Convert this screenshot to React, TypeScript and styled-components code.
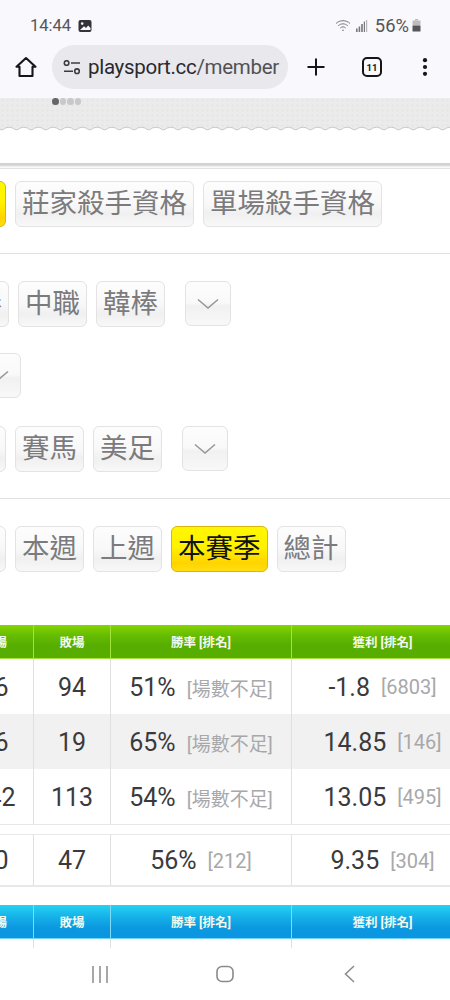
import React from 'react';
import styled, { createGlobalStyle } from 'styled-components';

const GlobalStyle = createGlobalStyle`
  html, body {
    margin: 0;
    padding: 0;
    background: #fff;
  }
  * {
    box-sizing: border-box;
  }
`;

const CJK = `Roboto, "Noto Sans CJK TC", sans-serif`;

const Screen = styled.div`
  width: 450px;
  height: 1000px;
  display: flex;
  flex-direction: column;
  overflow: hidden;
  font-family: ${CJK};
  background: #fff;
`;

const BrowserChrome = styled.header`
  flex: none;
  height: 98px;
  background: #f8f8fd;
  display: flex;
  flex-direction: column;
`;

const StatusBar = styled.div`
  height: 45px;
  padding: 6px 29px 0 30px;
  display: flex;
  align-items: center;
  color: #55555a;
`;

const Clock = styled.span`
  font-size: 16.5px;
  margin-right: 7px;
`;

const Spacer = styled.div`
  flex: 1;
`;

const SignalGroup = styled.div`
  display: flex;
  align-items: center;
  gap: 5px;
`;

const Battery = styled.span`
  font-size: 18.4px;
  margin: 0 3px 0 7px;
`;

const Toolbar = styled.div`
  height: 53px;
  padding: 0 0 9px 15px;
  display: flex;
  align-items: center;
  color: #1d1d20;
`;

const UrlPill = styled.div`
  width: 236px;
  height: 44px;
  margin-left: 15px;
  padding: 0 9px 0 11px;
  border-radius: 22px;
  background: #e8e8ed;
  display: flex;
  align-items: center;
  overflow: hidden;
`;

const UrlText = styled.span`
  margin-left: 7px;
  font-size: 20.5px;
  letter-spacing: -0.3px;
  color: #2a2a2e;
  white-space: nowrap;
`;

const UrlPath = styled.span`
  color: #515155;
`;

const ToolIcon = styled.div<{ $width: number }>`
  width: ${({ $width }) => $width}px;
  display: flex;
  justify-content: center;
`;

const Main = styled.main`
  flex: 1;
  min-height: 0;
  overflow: hidden;
`;

const Banner = styled.div`
  position: relative;
  height: 33px;
  background-color: #ebebeb;
  background-image: radial-gradient(#e6e6e6 1px, transparent 1.2px);
  background-size: 5px 5px;
`;

const BannerDots = styled.div`
  position: absolute;
  left: 52px;
  top: 0;
  display: flex;
  gap: 1px;
`;

const BannerDot = styled.span<{ $active?: boolean }>`
  width: 6.5px;
  height: 7px;
  border-radius: 50%;
  background: ${({ $active }) => ($active ? '#66666a' : '#c8c8ca')};
`;

const WaveEdge = styled.svg`
  position: absolute;
  left: 0;
  bottom: -2px;
  display: block;
`;

const BannerGap = styled.div`
  height: 32px;
`;

const HeavyRule = styled.div`
  height: 5px;
  background: linear-gradient(#d2d2d2 0, #d2d2d2 40%, #ededed 70%, #fff 100%);
`;

const Section = styled.section<{ $top: number; $bottom: number }>`
  padding: ${({ $top, $bottom }) => `${$top}px 0 ${$bottom}px`};
  border-top: 1px solid #e2e2e2;
`;

const ButtonRow = styled.div<{ $offset: number; $after?: number }>`
  display: flex;
  align-items: flex-start;
  gap: 9px;
  height: 46px;
  margin-left: ${({ $offset }) => -$offset}px;
  margin-bottom: ${({ $after = 0 }) => $after}px;
`;

const FilterButton = styled.div<{ $active?: boolean }>`
  flex: none;
  height: 46px;
  padding: 0 6px;
  border-radius: 6px;
  border: 1px solid ${({ $active }) => ($active ? '#d8b60a' : '#e3e3e3')};
  background: ${({ $active }) =>
    $active
      ? 'linear-gradient(#fff700 0, #fff200 45%, #ffd400 82%, #ffdf10 100%)'
      : 'linear-gradient(#fdfdfd 0, #f8f8f8 50%, #f0f0f0 72%, #f8f8f8 100%)'};
  color: ${({ $active }) => ($active ? '#111' : '#7b7b7e')};
  font-size: 27.5px;
  line-height: 44px;
  white-space: nowrap;
`;

const ChevronButton = styled.div<{ $lead: number }>`
  flex: none;
  width: 46px;
  height: 45px;
  margin-left: ${({ $lead }) => $lead}px;
  border-radius: 6px;
  border: 1px solid #e3e3e3;
  background: linear-gradient(#fdfdfd 0, #f9f9f9 48%, #f1f1f1 56%, #f8f8f8 100%);
  display: flex;
  align-items: center;
  justify-content: center;
`;

const Table = styled.div`
  width: 517px;
  margin-left: -44px;
`;

const TableRow = styled.div<{ $shade?: boolean; $height: number; $underline?: number; $overline?: boolean }>`
  display: grid;
  grid-template-columns: 77px 77px 181px 182px;
  height: ${({ $height }) => $height}px;
  background: ${({ $shade }) => ($shade ? '#f1f1f1' : '#fff')};
  border-bottom: ${({ $underline = 0 }) => $underline}px solid #e8e8e8;
  border-top: ${({ $overline }) => ($overline ? '1px solid #e8e8e8' : 'none')};
`;

const Cell = styled.div<{ $first?: boolean }>`
  display: flex;
  align-items: center;
  justify-content: center;
  padding-top: 1px;
  border-left: ${({ $first }) => ($first ? 'none' : '1px solid #e0e0e0')};
  font-size: 25px;
  color: #3a3a3c;
  white-space: nowrap;
`;

const Rank = styled.span<{ $note?: boolean }>`
  margin-left: 11px;
  font-size: ${({ $note }) => ($note ? 19 : 20)}px;
  color: #a8a8aa;
`;

const TableHead = styled.div<{ $tone: 'green' | 'blue' }>`
  display: grid;
  grid-template-columns: 77px 77px 181px 182px;
  height: 34px;
  background: ${({ $tone }) =>
    $tone === 'green'
      ? 'linear-gradient(#86d500 0, #67bd00 30%, #58ae00 60%, #58ae00 100%)'
      : 'linear-gradient(#25d2f3 0, #14aee8 40%, #0b98e0 70%, #0a96e0 100%)'};
  border-bottom: 1px solid ${({ $tone }) => ($tone === 'green' ? '#a4e23c' : '#6fd4f6')};
`;

const HeadCell = styled.div<{ $first?: boolean; $tone: 'green' | 'blue' }>`
  display: flex;
  align-items: center;
  justify-content: center;
  border-left: ${({ $first, $tone }) =>
    $first ? 'none' : `1px solid ${$tone === 'green' ? '#a4e23c' : '#7fdcf8'}`};
  font-size: 12.5px;
  font-weight: 700;
  color: #f4f9ee;
  white-space: nowrap;
`;

const Gap = styled.div<{ $height: number }>`
  height: ${({ $height }) => $height}px;
`;

const NavBar = styled.nav`
  flex: none;
  height: 52px;
  padding: 0 38px;
  background: #fff;
  display: grid;
  grid-template-columns: 1fr 1fr 1fr;
  align-items: center;
  justify-items: center;
`;

const Chevron = () => (
  <svg width="22" height="12" viewBox="0 0 22 12" fill="none" stroke="#969696" strokeWidth="1.5">
    <path d="M1 1.5 L11 10 L21 1.5" />
  </svg>
);

const ImageGlyph = () => (
  <svg width="14" height="14" viewBox="0 0 14 14">
    <rect x="0.5" y="1" width="13" height="12" rx="2" fill="#333338" />
    <circle cx="4.2" cy="4.6" r="1.3" fill="#f8f8fd" />
    <path d="M2 11 L6 7.2 L8 9 L10.2 6.4 L12.5 9 V11 Z" fill="#f8f8fd" />
  </svg>
);

const WifiGlyph = () => (
  <svg width="16" height="14" viewBox="0 0 16 14" fill="none" stroke="#77777c" strokeWidth="1">
    <path d="M1 4.5 C4.8 0.8 11.2 0.8 15 4.5" />
    <path d="M3.2 6.8 C6 4.2 10 4.2 12.8 6.8" />
    <path d="M5.3 9 C7 7.5 9 7.5 10.7 9" />
    <circle cx="8" cy="11.2" r="0.8" fill="#77777c" stroke="none" />
  </svg>
);

const SignalGlyph = () => (
  <svg width="12" height="12" viewBox="0 0 12 12" fill="#77777c">
    <rect x="0" y="8.5" width="1.6" height="3.5" />
    <rect x="2.6" y="6.5" width="1.6" height="5.5" />
    <rect x="5.2" y="4" width="1.6" height="8" />
    <rect x="7.8" y="1.5" width="1.2" height="10.5" />
    <rect x="10" y="0" width="1.2" height="12" fill="#b5b5b8" />
  </svg>
);

const BatteryGlyph = () => (
  <svg width="9" height="13" viewBox="0 0 9 13">
    <rect x="3" y="0" width="3" height="1.5" fill="#bdbdc0" />
    <rect x="0.5" y="1.5" width="8" height="5" fill="#bdbdc0" />
    <rect x="0.5" y="6.5" width="8" height="6" rx="0.6" fill="#55555a" />
  </svg>
);

const HomeGlyph = () => (
  <svg width="22" height="22" viewBox="0 0 22 22" fill="none" stroke="#161618" strokeWidth="2.1" strokeLinejoin="round">
    <path d="M1.5 10.8 L11 2 L20.5 10.8 H17.5 V20 H4.5 V10.8 Z" />
  </svg>
);

const TuneGlyph = () => (
  <svg width="18" height="15" viewBox="0 0 18 15" fill="none" stroke="#3c3c40" strokeWidth="1.6">
    <circle cx="3.6" cy="3" r="2.3" />
    <path d="M8 3 H17" />
    <path d="M1 11.2 H10" />
    <circle cx="14" cy="11.2" r="2.3" />
  </svg>
);

const PlusGlyph = () => (
  <svg width="18" height="18" viewBox="0 0 18 18" stroke="#161618" strokeWidth="2">
    <path d="M9 0.5 V17.5 M0.5 9 H17.5" />
  </svg>
);

const TabsGlyph = () => (
  <svg width="20" height="20" viewBox="0 0 20 20">
    <rect x="1" y="1" width="18" height="18" rx="4" fill="none" stroke="#161618" strokeWidth="2" />
    <text x="10" y="13.6" textAnchor="middle" fontSize="9.5" fontWeight="700" fontFamily="Roboto, sans-serif" fill="#161618">11</text>
  </svg>
);

const MoreGlyph = () => (
  <svg width="6" height="18" viewBox="0 0 6 18" fill="#161618">
    <circle cx="3" cy="2.2" r="2.1" />
    <circle cx="3" cy="9" r="2.1" />
    <circle cx="3" cy="15.8" r="2.1" />
  </svg>
);

const RecentsGlyph = () => (
  <svg width="16" height="17" viewBox="0 0 16 17" stroke="#8a8a8e" strokeWidth="1.5">
    <path d="M1 0 V17 M8 0 V17 M15 0 V17" />
  </svg>
);

const HomeNavGlyph = () => (
  <svg width="18" height="18" viewBox="0 0 18 18" fill="none" stroke="#8a8a8e" strokeWidth="1.6">
    <rect x="1" y="1.5" width="16" height="15" rx="5" />
  </svg>
);

const BackGlyph = () => (
  <svg width="11" height="18" viewBox="0 0 11 18" fill="none" stroke="#8a8a8e" strokeWidth="1.5">
    <path d="M10 1 L1.5 9 L10 17" />
  </svg>
);

const columns = ['勝場', '敗場', '勝率 [排名]', '獲利 [排名]'];

const Head = ({ tone }: { tone: 'green' | 'blue' }) => (
  <TableHead $tone={tone}>
    {columns.map((label, i) => (
      <HeadCell key={label} $tone={tone} $first={i === 0}>
        {label}
      </HeadCell>
    ))}
  </TableHead>
);

type Stat = {
  won: string;
  lost: string;
  rate: string;
  rateRank: string;
  profit: string;
  profitRank: string;
  shade?: boolean;
  overline?: boolean;
  height: number;
  underline: number;
};

const seasonRows: Stat[] = [
  { won: '96', lost: '94', rate: '51%', rateRank: '[場數不足]', profit: '-1.8', profitRank: '[6803]', height: 55, underline: 0 },
  { won: '36', lost: '19', rate: '65%', rateRank: '[場數不足]', profit: '14.85', profitRank: '[146]', shade: true, height: 55, underline: 0 },
  { won: '142', lost: '113', rate: '54%', rateRank: '[場數不足]', profit: '13.05', profitRank: '[495]', height: 56, underline: 1 },
];

const totalRow: Stat = {
  won: '60',
  lost: '47',
  rate: '56%',
  rateRank: '[212]',
  profit: '9.35',
  profitRank: '[304]',
  overline: true,
  height: 53,
  underline: 2,
};

const StatRow = ({ row }: { row: Stat }) => (
  <TableRow $shade={row.shade} $height={row.height} $underline={row.underline} $overline={row.overline}>
    <Cell $first>{row.won}</Cell>
    <Cell>{row.lost}</Cell>
    <Cell>
      {row.rate}
      <Rank $note={row.rateRank.length > 5}>{row.rateRank}</Rank>
    </Cell>
    <Cell>
      {row.profit}
      <Rank>{row.profitRank}</Rank>
    </Cell>
  </TableRow>
);

// scalloped edge under the banner, one bump every 14.7px
const wavePath = Array.from({ length: 32 })
  .map(() => 'q3.7 3.6 7.35 0 q3.7 -1.6 7.35 0')
  .join(' ');

const App = () => (
  <Screen>
    <GlobalStyle />
    <BrowserChrome>
      <StatusBar>
        <Clock>14:44</Clock>
        <ImageGlyph />
        <Spacer />
        <SignalGroup>
          <WifiGlyph />
          <SignalGlyph />
        </SignalGroup>
        <Battery>56%</Battery>
        <BatteryGlyph />
      </StatusBar>
      <Toolbar>
        <HomeGlyph />
        <UrlPill>
          <TuneGlyph />
          <UrlText>
            playsport.cc<UrlPath>/member</UrlPath>
          </UrlText>
        </UrlPill>
        <ToolIcon $width={56}>
          <PlusGlyph />
        </ToolIcon>
        <ToolIcon $width={56}>
          <TabsGlyph />
        </ToolIcon>
        <ToolIcon $width={50}>
          <MoreGlyph />
        </ToolIcon>
      </Toolbar>
    </BrowserChrome>

    <Main>
      <Banner>
        <BannerDots>
          <BannerDot $active />
          <BannerDot />
          <BannerDot />
          <BannerDot />
        </BannerDots>
        <WaveEdge width="450" height="8" viewBox="0 0 450 8">
          <path d={`M-2 3 ${wavePath} V8 H-2 Z`} fill="#fff" />
          <path d={`M-2 3 ${wavePath}`} fill="none" stroke="#c8c8c8" strokeWidth="1" />
        </WaveEdge>
      </Banner>
      <BannerGap />
      <HeavyRule />

      <Section $top={12} $bottom={26}>
        <ButtonRow $offset={118}>
          <FilterButton $active>主推資格</FilterButton>
          <FilterButton>莊家殺手資格</FilterButton>
          <FilterButton>單場殺手資格</FilterButton>
        </ButtonRow>
      </Section>

      <Section $top={27} $bottom={26}>
        <ButtonRow $offset={60} $after={26}>
          <FilterButton>日棒</FilterButton>
          <FilterButton>中職</FilterButton>
          <FilterButton>韓棒</FilterButton>
          <ChevronButton $lead={11}>
            <Chevron />
          </ChevronButton>
        </ButtonRow>
        <ButtonRow $offset={25} $after={27}>
          <ChevronButton $lead={0}>
            <Chevron />
          </ChevronButton>
        </ButtonRow>
        <ButtonRow $offset={63}>
          <FilterButton>足球</FilterButton>
          <FilterButton>賽馬</FilterButton>
          <FilterButton>美足</FilterButton>
          <ChevronButton $lead={11}>
            <Chevron />
          </ChevronButton>
        </ButtonRow>
      </Section>

      <Section $top={27} $bottom={53}>
        <ButtonRow $offset={63}>
          <FilterButton>今日</FilterButton>
          <FilterButton>本週</FilterButton>
          <FilterButton>上週</FilterButton>
          <FilterButton $active>本賽季</FilterButton>
          <FilterButton>總計</FilterButton>
        </ButtonRow>
      </Section>

      <Table>
        <Head tone="green" />
        {seasonRows.map((row) => (
          <StatRow key={row.profit} row={row} />
        ))}
        <Gap $height={9} />
        <StatRow row={totalRow} />
        <Gap $height={18} />
        <Head tone="blue" />
        <TableRow $height={12}>
          <Cell $first />
          <Cell />
          <Cell />
          <Cell />
        </TableRow>
      </Table>
    </Main>

    <NavBar>
      <RecentsGlyph />
      <HomeNavGlyph />
      <BackGlyph />
    </NavBar>
  </Screen>
);

export default App;
